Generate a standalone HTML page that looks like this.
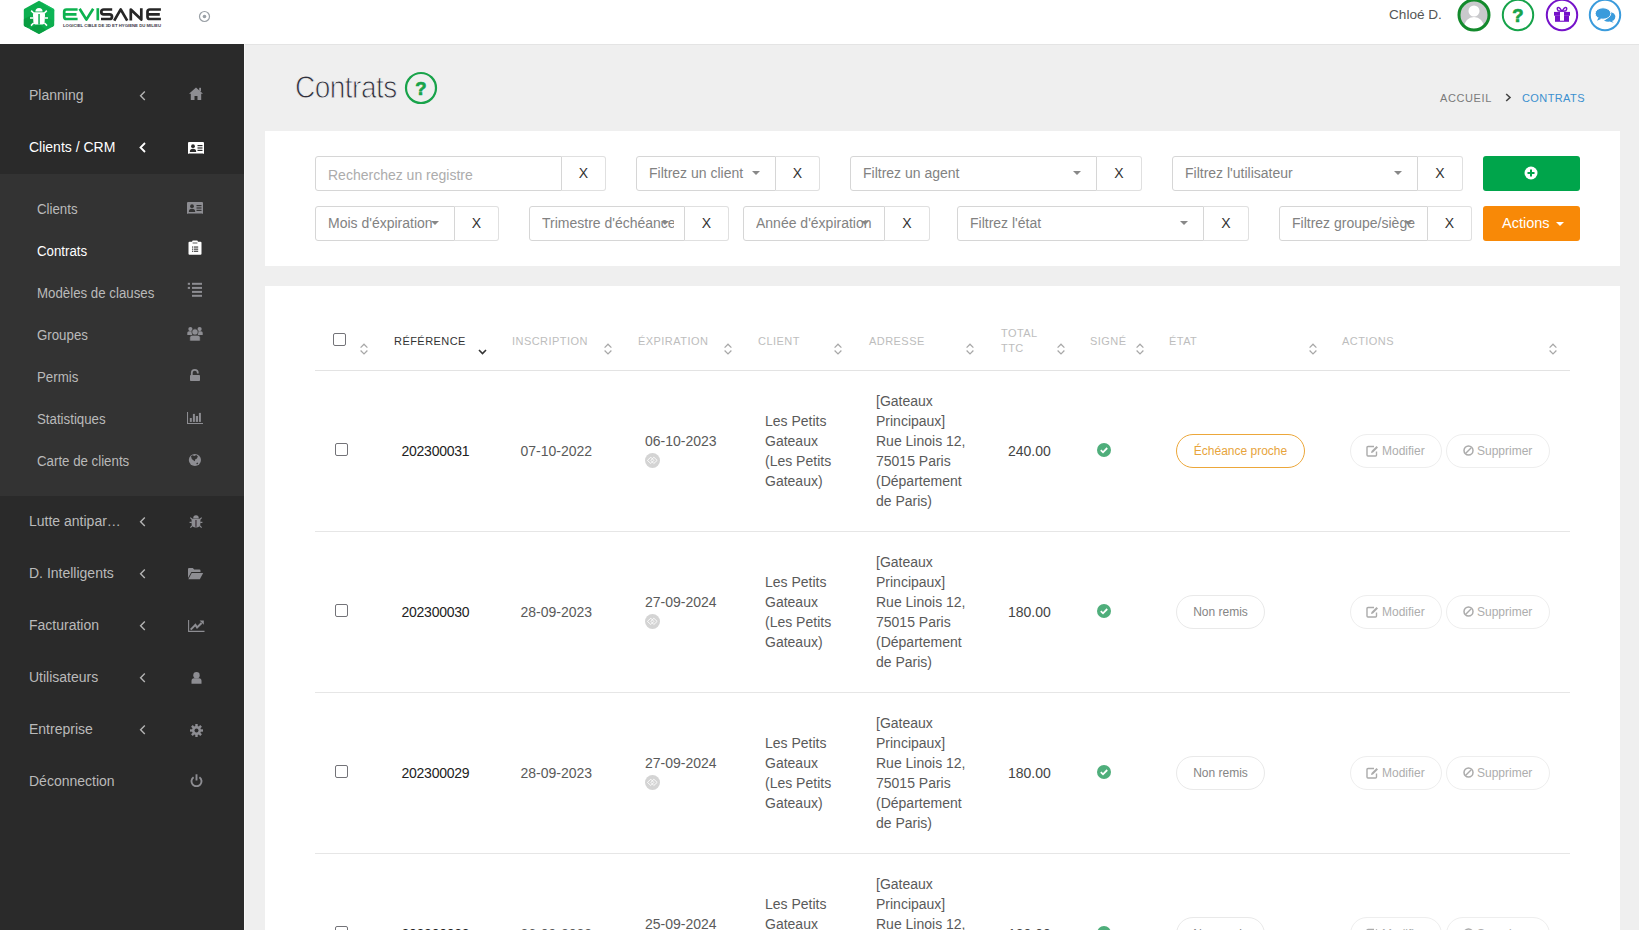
<!DOCTYPE html>
<html><head><meta charset="utf-8">
<style>
*{box-sizing:border-box;margin:0;padding:0}
html,body{width:1639px;height:930px;overflow:hidden;background:#efefef;font-family:"Liberation Sans",sans-serif}
.a{position:absolute}
#hdr{position:absolute;left:0;top:0;width:1639px;height:44px;background:#fff}
#side{position:absolute;left:0;top:44px;width:244px;height:886px;background:#2a2a2a}
#sub{position:absolute;left:0;top:174px;width:244px;height:322px;background:#333}
.mi{position:absolute;left:29px;font-size:14px;color:#b9b9b9;line-height:20px;white-space:nowrap}
.si{position:absolute;left:37px;font-size:14px;transform:scaleX(0.948);transform-origin:0 0;color:#b9b9b9;line-height:20px;white-space:nowrap}
.chev{position:absolute;left:139px;width:7px;height:10px}
.ic{position:absolute}

.inp{position:absolute;height:35px;border:1px solid #d6d6d6;border-radius:3px 0 0 3px;background:#fff;overflow:hidden}
.xb{position:absolute;height:35px;border:1px solid #e0e0e0;border-left:none;border-radius:0 3px 3px 0;background:#fff;font-size:14px;color:#333;text-align:center;line-height:32px}
.ph{position:absolute;left:12px;top:0;line-height:32px;font-size:14px;white-space:nowrap}
.car{position:absolute;width:0;height:0;border-left:4px solid transparent;border-right:4px solid transparent;border-top:4px solid #888}
.th{position:absolute;font-size:11px;letter-spacing:0.45px;color:#bdbdbd;line-height:15px;white-space:nowrap}
.srt{position:absolute}
.td{position:absolute;font-size:14px;color:#5a5a5a;line-height:20px;white-space:nowrap}
.cb{position:absolute;width:13px;height:13px;border:1px solid #737378;border-radius:2px;background:#fff}
.bdg{position:absolute;height:34px;border-radius:17px;font-size:12px;text-align:center;line-height:32px;white-space:nowrap}
</style></head><body>
<div id="hdr">
  <!-- logo -->
  <svg class="a" style="left:22px;top:0" width="34" height="35" viewBox="0 0 34 35">
    <defs><clipPath id="hx"><path d="M17 0.8 L31.5 8.8 Q32.2 9.2 32.2 10 L32.2 25 Q32.2 25.8 31.5 26.2 L17 34 L2.5 26.2 Q1.8 25.8 1.8 25 L1.8 10 Q1.8 9.2 2.5 8.8 Z"/></clipPath></defs>
    <g clip-path="url(#hx)">
    <rect x="0" y="0" width="34" height="35" fill="#0cae4e"/>
    <path d="M17 0 L34 0 L34 12 L24 6Z" fill="#14c262" opacity=".8"/>
    <path d="M0 20 L8 16 L14 22 L6 28 L0 26Z" fill="#07963c" opacity=".7"/>
    <path d="M8 28 L17 24 L24 30 L17 35 L8 35Z" fill="#089a3e" opacity=".8"/>
    <path d="M24 12 L34 8 L34 22 L26 18Z" fill="#10b85a" opacity=".7"/>
    </g>
    <path d="M13.4 11.6 A3.6 3.6 0 0 1 20.6 11.6 Z" fill="#fff"/>
    <path d="M12.2 12.2 L21.8 12.2 Q23.2 12.6 23 15 L22.6 22.5 Q22.4 24.4 20.5 24.4 L13.5 24.4 Q11.6 24.4 11.4 22.5 L11 15 Q10.8 12.6 12.2 12.2Z" fill="#fff"/>
    <rect x="16.3" y="14" width="1.5" height="10.5" fill="#0cae4e"/>
    <path d="M11.8 13.2 L9.2 10.6 M22.2 13.2 L24.8 10.6 M11.2 18 L8 18 M22.8 18 L26 18 M11.6 23 L9 25.6 M22.4 23 L25 25.6" stroke="#fff" stroke-width="1.6"/>
  </svg>
  <svg class="a" style="left:62px;top:7px" width="102" height="22" viewBox="0 0 102 22">
    <g fill="none" stroke-width="2.7" stroke-linejoin="round">
      <path d="M15.6 2.5 H4.5 Q2.2 2.5 2.2 4.8 V9.7 Q2.2 12 4.5 12 H15.6 M2.2 7.3 H14.5" stroke="#0db24f"/>
      <path d="M17.6 1.8 L24.4 12.6 L31.2 1.8" stroke="#0db24f"/>
      <path d="M35.8 1.2 V13.3" stroke="#0db24f"/>
      <path d="M50.2 2.5 H41.8 Q39.3 2.5 39.3 4.9 Q39.3 7.3 41.8 7.3 H47.6 Q50 7.3 50 9.65 Q50 12 47.6 12 H39" stroke="#262626"/>
      <path d="M52.2 13.6 L58.7 2.3 L65.2 13.6" stroke="#262626"/>
      <path d="M68.8 13.6 V2.6 L79.3 12.6 V1.2" stroke="#262626"/>
      <path d="M98.9 2.5 H87.8 Q85.5 2.5 85.5 4.8 V9.7 Q85.5 12 87.8 12 H98.9 M85.5 7.3 H97.8" stroke="#262626"/>
    </g>
    <text x="1" y="20" font-family="Liberation Sans" font-weight="bold" font-size="4" fill="#3a3848" textLength="98" lengthAdjust="spacingAndGlyphs">LOGICIEL CIBLE DE 3D ET HYGIENE DU MILIEU</text>
  </svg>
  <svg class="a" style="left:198px;top:10px" width="13" height="13" viewBox="0 0 13 13">
    <circle cx="6.5" cy="6.5" r="5" fill="none" stroke="#9aa0a6" stroke-width="1.2"/>
    <circle cx="6.5" cy="6.5" r="1.8" fill="#9aa0a6"/>
  </svg>
  <div class="a" style="left:1389px;top:5px;font-size:13.6px;color:#555;line-height:20px">Chloé D.</div>
  <!-- avatar -->
  <svg class="a" style="left:1457px;top:-2px" width="34" height="34" viewBox="0 0 34 34">
    <defs><clipPath id="cp"><circle cx="17" cy="17" r="14"/></clipPath></defs>
    <circle cx="17" cy="17" r="14.5" fill="#c9c9cc"/>
    <g clip-path="url(#cp)" fill="#fff">
      <circle cx="17" cy="13" r="5.5"/>
      <ellipse cx="17" cy="29.5" rx="10" ry="10.5"/>
    </g>
    <circle cx="17" cy="17" r="15" fill="none" stroke="#138a2c" stroke-width="3"/>
  </svg>
  <svg class="a" style="left:1501px;top:-2px" width="34" height="34" viewBox="0 0 34 34">
    <circle cx="17" cy="17" r="15.2" fill="#fff" stroke="#16a34a" stroke-width="2"/>
    <text x="17" y="23.8" text-anchor="middle" font-family="Liberation Sans" font-weight="bold" font-size="18.5" fill="#16a34a" stroke="#16a34a" stroke-width="0.7">?</text>
  </svg>
  <svg class="a" style="left:1545px;top:-2px" width="34" height="34" viewBox="0 0 34 34">
    <circle cx="17" cy="17" r="15.2" fill="#fff" stroke="#7512c9" stroke-width="2"/>
    <g fill="#7512c9">
      <rect x="9" y="13.9" width="16" height="3.8"/>
      <rect x="10" y="17.5" width="14" height="6.3"/>
    </g>
    <path d="M17 13.5 Q14.5 8.8 12.8 9.6 Q11.5 10.6 13.2 12.8 Z M17 13.5 Q19.5 8.8 21.2 9.6 Q22.5 10.6 20.8 12.8 Z" fill="none" stroke="#7512c9" stroke-width="1.4"/>
    <rect x="15" y="13.9" width="4" height="8.8" fill="#fff"/>
  </svg>
  <svg class="a" style="left:1588px;top:-2px" width="34" height="34" viewBox="0 0 34 34">
    <circle cx="17" cy="17" r="15.2" fill="#fff" stroke="#3a9bdc" stroke-width="2"/>
    <path d="M18.5 14.5 Q23 13.5 26 15.5 Q28 17.5 27 20.5 Q26 22.5 24 23 L25.7 24.8 L21.5 23.6 Q18.5 24 16 22.5 Q21 21 18.5 14.5Z" fill="#3a9bdc"/>
    <ellipse cx="15" cy="15.5" rx="7.8" ry="5.7" fill="#3a9bdc" stroke="#fff" stroke-width="0.9"/>
    <path d="M10.5 19.5 L9 22.7 L13.5 20.8Z" fill="#3a9bdc"/>
  </svg>
</div>
<div class="a" style="left:0;top:44px;width:1639px;height:1px;background:#e4e4e4"></div>

<div id="side">
</div>
<div id="sub"></div>
<div class="mi" style="top:85.3px;color:#bababa">Planning</div>
<svg class="a" style="left:138px;top:91px" width="9" height="11" viewBox="0 0 9 11"><path d="M6.8 0.6 L2.6 4.8 L6.8 9" fill="none" stroke="#b4b4b4" stroke-width="1.4"/></svg>
<div class="mi" style="top:137.3px;color:#fff">Clients / CRM</div>
<svg class="a" style="left:138px;top:142px" width="9" height="11" viewBox="0 0 9 11"><path d="M7 1 L2.5 5.5 L7 10" fill="none" stroke="#fff" stroke-width="1.8"/></svg>
<div class="mi" style="top:511.4px;color:#bababa">Lutte antipar…</div>
<svg class="a" style="left:138px;top:517px" width="9" height="11" viewBox="0 0 9 11"><path d="M6.8 0.6 L2.6 4.8 L6.8 9" fill="none" stroke="#b4b4b4" stroke-width="1.4"/></svg>
<div class="mi" style="top:563.4px;color:#bababa">D. Intelligents</div>
<svg class="a" style="left:138px;top:569px" width="9" height="11" viewBox="0 0 9 11"><path d="M6.8 0.6 L2.6 4.8 L6.8 9" fill="none" stroke="#b4b4b4" stroke-width="1.4"/></svg>
<div class="mi" style="top:615.4px;color:#bababa">Facturation</div>
<svg class="a" style="left:138px;top:621px" width="9" height="11" viewBox="0 0 9 11"><path d="M6.8 0.6 L2.6 4.8 L6.8 9" fill="none" stroke="#b4b4b4" stroke-width="1.4"/></svg>
<div class="mi" style="top:667.4px;color:#bababa">Utilisateurs</div>
<svg class="a" style="left:138px;top:673px" width="9" height="11" viewBox="0 0 9 11"><path d="M6.8 0.6 L2.6 4.8 L6.8 9" fill="none" stroke="#b4b4b4" stroke-width="1.4"/></svg>
<div class="mi" style="top:719.4px;color:#bababa">Entreprise</div>
<svg class="a" style="left:138px;top:725px" width="9" height="11" viewBox="0 0 9 11"><path d="M6.8 0.6 L2.6 4.8 L6.8 9" fill="none" stroke="#b4b4b4" stroke-width="1.4"/></svg>
<div class="mi" style="top:771.4px;color:#bababa">Déconnection</div>
<div class="si" style="top:199.05px;color:#bababa">Clients</div>
<div class="si" style="top:241.05px;color:#fff">Contrats</div>
<div class="si" style="top:283.05px;color:#bababa">Modèles de clauses</div>
<div class="si" style="top:325.05px;color:#bababa">Groupes</div>
<div class="si" style="top:367.05px;color:#bababa">Permis</div>
<div class="si" style="top:409.05px;color:#bababa">Statistiques</div>
<div class="si" style="top:451.05px;color:#bababa">Carte de clients</div>
<svg class="a" style="left:189px;top:87px" width="14" height="13" viewBox="0 0 14 13"><path d="M7 0.5 L0 6.8 L1.8 6.8 L1.8 13 L5.5 13 L5.5 9 L8.5 9 L8.5 13 L12.2 13 L12.2 6.8 L14 6.8 Z" fill="#8d8d92"/><rect x="10.2" y="0.8" width="1.8" height="3.5" fill="#8d8d92"/></svg>
<svg class="a" style="left:188px;top:142px" width="16" height="12" viewBox="0 0 16 12"><rect x="0" y="0" width="16" height="12" rx="1" fill="#fff"/><circle cx="5" cy="4.2" r="1.9" fill="#2a2a2a"/><path d="M1.8 10 Q1.8 6.8 5 6.8 Q8.2 6.8 8.2 10Z" fill="#2a2a2a"/><rect x="9.5" y="3" width="5" height="1.2" fill="#2a2a2a"/><rect x="9.5" y="5.4" width="5" height="1.2" fill="#2a2a2a"/><rect x="9.5" y="7.8" width="5" height="1.2" fill="#2a2a2a"/><rect x="1" y="11" width="14" height="1" fill="#2a2a2a" opacity=".5"/></svg>
<svg class="a" style="left:187px;top:202px" width="16" height="12" viewBox="0 0 16 12"><rect x="0" y="0" width="16" height="12" rx="1" fill="#8d8d92"/><circle cx="5" cy="4.2" r="1.9" fill="#333"/><path d="M1.8 10 Q1.8 6.8 5 6.8 Q8.2 6.8 8.2 10Z" fill="#333"/><rect x="9.5" y="3" width="5" height="1.2" fill="#333"/><rect x="9.5" y="5.4" width="5" height="1.2" fill="#333"/><rect x="9.5" y="7.8" width="5" height="1.2" fill="#333"/><rect x="1" y="11" width="14" height="1" fill="#333" opacity=".5"/></svg>
<svg class="a" style="left:188px;top:240px" width="14" height="16" viewBox="0 0 14 16"><rect x="0.5" y="1.8" width="13" height="13" rx="1" fill="#fff"/><rect x="4.2" y="0.6" width="5.6" height="2.6" rx="0.8" fill="#fff"/><rect x="4.6" y="2.6" width="4.8" height="0.8" fill="#333"/><rect x="4" y="6.5" width="1.1" height="1.1" fill="#333"/><rect x="5.8" y="6.5" width="4.4" height="1.1" fill="#333"/><rect x="4" y="8.6" width="1.1" height="1.1" fill="#333"/><rect x="5.8" y="8.6" width="4.4" height="1.1" fill="#333"/><rect x="4" y="10.7" width="1.1" height="1.1" fill="#333"/><rect x="5.8" y="10.7" width="4.4" height="1.1" fill="#333"/></svg>
<svg class="a" style="left:187px;top:282px" width="16" height="16" viewBox="0 0 16 16"><rect x="5" y="0.8" width="10" height="2" fill="#8d8d92"/><rect x="5" y="4.9" width="10" height="2" fill="#8d8d92"/><rect x="5" y="8.9" width="10" height="2" fill="#8d8d92"/><rect x="5" y="12.8" width="10" height="2" fill="#8d8d92"/><rect x="0.8" y="0.8" width="2.2" height="2" fill="#8d8d92"/><rect x="0.8" y="4.9" width="2.2" height="2" fill="#8d8d92"/></svg>
<svg class="a" style="left:187px;top:327px" width="16" height="15" viewBox="0 0 16 15"><circle cx="3.4" cy="2.1" r="2.1" fill="#8d8d92"/><circle cx="12.6" cy="2.1" r="2.1" fill="#8d8d92"/><path d="M0.3 8 L0.3 5.8 Q0.3 4.2 2 4.2 L5 4.2 L5 8Z M15.7 8 L15.7 5.8 Q15.7 4.2 14 4.2 L11 4.2 L11 8Z" fill="#8d8d92"/><circle cx="8" cy="5" r="3.2" stroke="#333" stroke-width="0.7" fill="#8d8d92"/><path d="M2.8 14 L2.8 10.5 Q2.8 8.3 5 8.3 L11 8.3 Q13.2 8.3 13.2 10.5 L13.2 14Z" stroke="#333" stroke-width="0.6" fill="#8d8d92"/></svg>
<svg class="a" style="left:189px;top:369px" width="12" height="12" viewBox="0 0 12 12"><path d="M2.8 6 V3.8 Q2.8 0.9 5.8 0.9 Q8.8 0.9 8.8 3.8 V4.5" fill="none" stroke="#8d8d92" stroke-width="1.8"/><rect x="1" y="6" width="10" height="6" rx="0.8" fill="#8d8d92"/></svg>
<svg class="a" style="left:187px;top:412px" width="17" height="12" viewBox="0 0 17 12"><path d="M0.5 0 V11.5 H16" fill="none" stroke="#8d8d92" stroke-width="1.1"/><rect x="2.8" y="6" width="2" height="3.9" fill="#8d8d92"/><rect x="5.9" y="1.9" width="2" height="8" fill="#8d8d92"/><rect x="8.8" y="4" width="2.2" height="5.9" fill="#8d8d92"/><rect x="11.9" y="0.9" width="2" height="9" fill="#8d8d92"/></svg>
<svg class="a" style="left:188px;top:453px" width="14" height="14" viewBox="0 0 14 14"><circle cx="6.9" cy="7" r="6.1" fill="#8d8d92"/><path d="M3 3.2 L4.5 2.2 L6.3 3 L8.3 2 L9.9 3.4 L8.7 5.8 L7.3 6.3 L6.9 8.2 L5.3 7.2 L3.8 6Z" fill="#333"/><path d="M8.2 10.3 L9.5 9.4 L10.2 10.6 L9 11.4Z" fill="#333"/></svg>
<svg class="a" style="left:189px;top:514px" width="14" height="15" viewBox="0 0 14 15"><path d="M4.2 4.4 A2.8 3.1 0 0 1 9.8 4.4Z" fill="#8d8d92"/><path d="M2.6 4.8 H11.4 V10 Q11.4 13.4 7 13.4 Q2.6 13.4 2.6 10Z" fill="#8d8d92"/><rect x="6.2" y="6" width="1.5" height="6.8" fill="#4a4048"/><path d="M0.6 8.3 H2.8 M11.2 8.3 H13.4 M1.3 3.6 L3.2 5.4 M12.7 3.6 L10.8 5.4 M1.4 13.7 L3.4 11.6 M12.6 13.7 L10.6 11.6" stroke="#8d8d92" stroke-width="1.2"/></svg>
<svg class="a" style="left:188px;top:568px" width="16" height="12" viewBox="0 0 16 12"><path d="M0 1 Q0 0 1 0 L4.8 0 L6.2 1.5 L11.5 1.5 Q12.5 1.5 12.5 2.5 L12.5 4 L3.4 4 L0 10Z" fill="#8d8d92"/><path d="M3.7 5 L15.2 5 L11.8 11.2 L0.4 11.2Z" fill="#8d8d92"/></svg>
<svg class="a" style="left:187.5px;top:620px" width="17" height="13" viewBox="0 0 17 13"><path d="M0.6 0 V11.4 H16.5" fill="none" stroke="#8d8d92" stroke-width="1.1"/><path d="M2.7 9.6 L7.4 4.9 L9.1 7.5 L13.6 3" fill="none" stroke="#8d8d92" stroke-width="2"/><path d="M11.6 0.6 L15.8 0.6 L15.8 4.8Z" fill="#8d8d92"/></svg>
<svg class="a" style="left:190.5px;top:672px" width="11" height="12" viewBox="0 0 11 12"><circle cx="5.5" cy="3.2" r="3.2" fill="#8d8d92"/><path d="M0.5 11.8 L0.5 9 Q0.5 6.3 3 6.3 L8 6.3 Q10.5 6.3 10.5 9 L10.5 11.8Z" fill="#8d8d92"/></svg>
<svg class="a" style="left:189.5px;top:723.5px" width="13" height="13" viewBox="0 0 13 13"><rect x="5.3" y="0" width="2.4" height="13" fill="#8d8d92" transform="rotate(0 6.5 6.5)"/><rect x="5.3" y="0" width="2.4" height="13" fill="#8d8d92" transform="rotate(45 6.5 6.5)"/><rect x="5.3" y="0" width="2.4" height="13" fill="#8d8d92" transform="rotate(90 6.5 6.5)"/><rect x="5.3" y="0" width="2.4" height="13" fill="#8d8d92" transform="rotate(135 6.5 6.5)"/><circle cx="6.5" cy="6.5" r="4.5" fill="#8d8d92"/><circle cx="6.5" cy="6.5" r="2" fill="#2a2a2a"/></svg>
<svg class="a" style="left:189.5px;top:774px" width="13" height="13" viewBox="0 0 13 13"><path d="M3.6 3.2 A5 5 0 1 0 9.4 3.2" fill="none" stroke="#8d8d92" stroke-width="1.9"/><rect x="5.55" y="0.3" width="1.9" height="6.2" fill="#8d8d92"/></svg>
<div class="a" style="left:244px;top:44px;width:1px;height:886px;background:#f7f7f7"></div>


<div class="a" style="left:295px;top:68px;font-size:31px;line-height:40px;color:#30303c;-webkit-text-stroke:0.9px #efefef;letter-spacing:-0.6px;transform:scaleX(0.905);transform-origin:0 0;white-space:nowrap">Contrats</div>
<svg class="a" style="left:404px;top:71px" width="34" height="34" viewBox="0 0 34 34"><circle cx="17" cy="17" r="15" fill="none" stroke="#18a34a" stroke-width="2.2"/><text x="17" y="23.8" text-anchor="middle" font-family="Liberation Sans" font-weight="bold" font-size="18.5" fill="#18a34a" stroke="#18a34a" stroke-width="0.7">?</text></svg>
<div class="a" style="left:1440px;top:91px;font-size:11px;letter-spacing:0.6px;color:#7a7a7a;line-height:14px">ACCUEIL</div>
<svg class="a" style="left:1505px;top:93px" width="7" height="9" viewBox="0 0 7 9"><path d="M1.2 1 L5 4.5 L1.2 8" fill="none" stroke="#444" stroke-width="1.6"/></svg>
<div class="a" style="left:1522px;top:91px;font-size:11px;letter-spacing:0.4px;color:#3b8fd0;line-height:14px">CONTRATS</div>
<div class="a" style="left:265px;top:131px;width:1355px;height:135px;background:#fff"></div>
<div class="inp" style="left:315px;top:156px;width:247px"><div class="ph" style="color:#acacac;right:10px;overflow:hidden;top:1.5px">Recherchez un registre</div></div>
<div class="xb" style="left:562px;top:156px;width:44px">X</div>
<div class="inp" style="left:636px;top:156px;width:140px"><div class="ph" style="color:#828282;right:10px;overflow:hidden;top:0px">Filtrez un client</div></div>
<div class="car" style="left:752px;top:171px"></div>
<div class="xb" style="left:776px;top:156px;width:44px">X</div>
<div class="inp" style="left:850px;top:156px;width:247px"><div class="ph" style="color:#828282;right:10px;overflow:hidden;top:0px">Filtrez un agent</div></div>
<div class="car" style="left:1073px;top:171px"></div>
<div class="xb" style="left:1097px;top:156px;width:45px">X</div>
<div class="inp" style="left:1172px;top:156px;width:246px"><div class="ph" style="color:#828282;right:10px;overflow:hidden;top:0px">Filtrez l'utilisateur</div></div>
<div class="car" style="left:1394px;top:171px"></div>
<div class="xb" style="left:1418px;top:156px;width:45px">X</div>
<div class="inp" style="left:315px;top:206px;width:140px"><div class="ph" style="color:#828282;right:10px;overflow:hidden;top:0px">Mois d'éxpiration</div></div>
<div class="car" style="left:431px;top:221px"></div>
<div class="xb" style="left:455px;top:206px;width:44px">X</div>
<div class="inp" style="left:529px;top:206px;width:156px"><div class="ph" style="color:#828282;right:10px;overflow:hidden;top:0px">Trimestre d'échéance</div></div>
<div class="car" style="left:661px;top:221px"></div>
<div class="xb" style="left:685px;top:206px;width:44px">X</div>
<div class="inp" style="left:743px;top:206px;width:142px"><div class="ph" style="color:#828282;right:10px;overflow:hidden;top:0px">Année d'éxpiration</div></div>
<div class="car" style="left:861px;top:221px"></div>
<div class="xb" style="left:885px;top:206px;width:45px">X</div>
<div class="inp" style="left:957px;top:206px;width:247px"><div class="ph" style="color:#828282;right:10px;overflow:hidden;top:0px">Filtrez l'état</div></div>
<div class="car" style="left:1180px;top:221px"></div>
<div class="xb" style="left:1204px;top:206px;width:45px">X</div>
<div class="inp" style="left:1279px;top:206px;width:149px"><div class="ph" style="color:#828282;right:10px;overflow:hidden;top:0px">Filtrez groupe/siège</div></div>
<div class="car" style="left:1404px;top:221px"></div>
<div class="xb" style="left:1428px;top:206px;width:44px">X</div>
<div class="a" style="left:1483px;top:156px;width:97px;height:35px;background:#00a54b;border-radius:3px"></div>
<svg class="a" style="left:1524px;top:166px" width="14" height="14" viewBox="0 0 14 14"><circle cx="7" cy="7" r="6.5" fill="#fff"/><rect x="6" y="3.5" width="2" height="7" fill="#00a54b"/><rect x="3.5" y="6" width="7" height="2" fill="#00a54b"/></svg>
<div class="a" style="left:1483px;top:206px;width:97px;height:35px;background:#f88907;border-radius:3px"></div>
<div class="a" style="left:1502px;top:213px;font-size:14.5px;line-height:20px;color:#fff">Actions</div>
<div class="car" style="left:1556px;top:222px;border-top-color:#fff;border-left-width:4px;border-right-width:4px"></div>
<div class="a" style="left:265px;top:286px;width:1355px;height:644px;background:#fff"></div>
<div class="cb" style="left:333px;top:333px"></div>
<svg class="srt" style="left:360px;top:343px" width="8" height="12" viewBox="0 0 8 12"><path d="M0.6 4.6 L4 1.2 L7.4 4.6 M0.6 7.5 L4 10.9 L7.4 7.5" fill="none" stroke="#a8a8a8" stroke-width="1.25"/></svg>
<div class="th" style="left:394px;top:334px;color:#333">RÉFÉRENCE</div>
<div class="th" style="left:512px;top:334px">INSCRIPTION</div>
<div class="th" style="left:638px;top:334px">ÉXPIRATION</div>
<div class="th" style="left:758px;top:334px">CLIENT</div>
<div class="th" style="left:869px;top:334px">ADRESSE</div>
<div class="th" style="left:1090px;top:334px">SIGNÉ</div>
<div class="th" style="left:1169px;top:334px">ÉTAT</div>
<div class="th" style="left:1342px;top:334px">ACTIONS</div>
<div class="th" style="left:1001px;top:326px">TOTAL<br>TTC</div>
<svg class="srt" style="left:478px;top:349px" width="9" height="6" viewBox="0 0 9 6"><path d="M1 1 L4.5 4.5 L8 1" fill="none" stroke="#333" stroke-width="1.6"/></svg>
<svg class="srt" style="left:604px;top:343px" width="8" height="12" viewBox="0 0 8 12"><path d="M0.6 4.6 L4 1.2 L7.4 4.6 M0.6 7.5 L4 10.9 L7.4 7.5" fill="none" stroke="#a8a8a8" stroke-width="1.25"/></svg>
<svg class="srt" style="left:724px;top:343px" width="8" height="12" viewBox="0 0 8 12"><path d="M0.6 4.6 L4 1.2 L7.4 4.6 M0.6 7.5 L4 10.9 L7.4 7.5" fill="none" stroke="#a8a8a8" stroke-width="1.25"/></svg>
<svg class="srt" style="left:834px;top:343px" width="8" height="12" viewBox="0 0 8 12"><path d="M0.6 4.6 L4 1.2 L7.4 4.6 M0.6 7.5 L4 10.9 L7.4 7.5" fill="none" stroke="#a8a8a8" stroke-width="1.25"/></svg>
<svg class="srt" style="left:966px;top:343px" width="8" height="12" viewBox="0 0 8 12"><path d="M0.6 4.6 L4 1.2 L7.4 4.6 M0.6 7.5 L4 10.9 L7.4 7.5" fill="none" stroke="#a8a8a8" stroke-width="1.25"/></svg>
<svg class="srt" style="left:1057px;top:343px" width="8" height="12" viewBox="0 0 8 12"><path d="M0.6 4.6 L4 1.2 L7.4 4.6 M0.6 7.5 L4 10.9 L7.4 7.5" fill="none" stroke="#a8a8a8" stroke-width="1.25"/></svg>
<svg class="srt" style="left:1136px;top:343px" width="8" height="12" viewBox="0 0 8 12"><path d="M0.6 4.6 L4 1.2 L7.4 4.6 M0.6 7.5 L4 10.9 L7.4 7.5" fill="none" stroke="#a8a8a8" stroke-width="1.25"/></svg>
<svg class="srt" style="left:1309px;top:343px" width="8" height="12" viewBox="0 0 8 12"><path d="M0.6 4.6 L4 1.2 L7.4 4.6 M0.6 7.5 L4 10.9 L7.4 7.5" fill="none" stroke="#a8a8a8" stroke-width="1.25"/></svg>
<svg class="srt" style="left:1549px;top:343px" width="8" height="12" viewBox="0 0 8 12"><path d="M0.6 4.6 L4 1.2 L7.4 4.6 M0.6 7.5 L4 10.9 L7.4 7.5" fill="none" stroke="#a8a8a8" stroke-width="1.25"/></svg>
<div class="a" style="left:315px;top:370px;width:1255px;height:1px;background:#e3e3e3"></div>
<div class="cb" style="left:335px;top:443px"></div>
<div class="td" style="left:401.5px;top:441.1px;color:#222;letter-spacing:-0.25px">202300031</div>
<div class="td" style="left:520.5px;top:441.1px">07-10-2022</div>
<div class="td" style="left:645px;top:431.4px">06-10-2023</div>
<svg class="a" style="left:645px;top:453px" width="15" height="15" viewBox="0 0 15 15"><circle cx="7.5" cy="7.5" r="7.5" fill="#d4d4d4"/><path d="M2.4 7.4 L5.8 4.2 L8.9 7.4 L5.8 10.5Z M5.9 7.4 L8.8 4.2 L12.2 7.4 L8.8 10.5Z" fill="none" stroke="#fff" stroke-width="0.85"/></svg>
<div class="td" style="left:765px;top:410.8px">Les Petits</div>
<div class="td" style="left:765px;top:430.8px">Gateaux</div>
<div class="td" style="left:765px;top:450.8px">(Les Petits</div>
<div class="td" style="left:765px;top:470.8px">Gateaux)</div>
<div class="td" style="left:876px;top:391.1px">[Gateaux</div>
<div class="td" style="left:876px;top:411.1px">Principaux]</div>
<div class="td" style="left:876px;top:431.1px">Rue Linois 12,</div>
<div class="td" style="left:876px;top:451.1px">75015 Paris</div>
<div class="td" style="left:876px;top:471.1px">(Département</div>
<div class="td" style="left:876px;top:491.1px">de Paris)</div>
<div class="td" style="left:1008px;top:440.9px;color:#444">240.00</div>
<svg class="a" style="left:1097px;top:443px" width="14" height="14" viewBox="0 0 14 14"><circle cx="7" cy="7" r="7" fill="#4fae7b"/><path d="M3.8 7.2 L6 9.3 L10.2 5" fill="none" stroke="#fff" stroke-width="1.8"/></svg>
<div class="bdg" style="left:1176px;top:434px;width:129px;border:1px solid #eca73a;color:#e7a43c">Échéance proche</div>
<div class="bdg" style="left:1350px;top:434px;width:92px;border:1px solid #eeeeee;color:#adadad"><svg style="position:absolute;left:15px;top:9.5px" width="13" height="12" viewBox="0 0 13 12"><path d="M8 1.5 H2 Q1 1.5 1 2.5 V10 Q1 11 2 11 H9.5 Q10.5 11 10.5 10 V6.5" fill="none" stroke="#ababab" stroke-width="1.4"/><path d="M5 8 L5.5 6 L10.5 1 L12 2.5 L7 7.5Z" fill="#ababab"/></svg><span style="position:absolute;left:31px;top:0">Modifier</span></div>
<div class="bdg" style="left:1446px;top:434px;width:104px;border:1px solid #eeeeee;color:#adadad"><svg style="position:absolute;left:16px;top:10px" width="11" height="11" viewBox="0 0 11 11"><circle cx="5.5" cy="5.5" r="4.5" fill="none" stroke="#ababab" stroke-width="1.5"/><path d="M2.5 8.5 L8.5 2.5" stroke="#ababab" stroke-width="1.5"/></svg><span style="position:absolute;left:30px;top:0">Supprimer</span></div>
<div class="a" style="left:315px;top:531px;width:1255px;height:1px;background:#e6e6e6"></div>
<div class="cb" style="left:335px;top:604px"></div>
<div class="td" style="left:401.5px;top:602.1px;color:#222;letter-spacing:-0.25px">202300030</div>
<div class="td" style="left:520.5px;top:602.1px">28-09-2023</div>
<div class="td" style="left:645px;top:592.4px">27-09-2024</div>
<svg class="a" style="left:645px;top:614px" width="15" height="15" viewBox="0 0 15 15"><circle cx="7.5" cy="7.5" r="7.5" fill="#d4d4d4"/><path d="M2.4 7.4 L5.8 4.2 L8.9 7.4 L5.8 10.5Z M5.9 7.4 L8.8 4.2 L12.2 7.4 L8.8 10.5Z" fill="none" stroke="#fff" stroke-width="0.85"/></svg>
<div class="td" style="left:765px;top:571.8px">Les Petits</div>
<div class="td" style="left:765px;top:591.8px">Gateaux</div>
<div class="td" style="left:765px;top:611.8px">(Les Petits</div>
<div class="td" style="left:765px;top:631.8px">Gateaux)</div>
<div class="td" style="left:876px;top:552.1px">[Gateaux</div>
<div class="td" style="left:876px;top:572.1px">Principaux]</div>
<div class="td" style="left:876px;top:592.1px">Rue Linois 12,</div>
<div class="td" style="left:876px;top:612.1px">75015 Paris</div>
<div class="td" style="left:876px;top:632.1px">(Département</div>
<div class="td" style="left:876px;top:652.1px">de Paris)</div>
<div class="td" style="left:1008px;top:601.9px;color:#444">180.00</div>
<svg class="a" style="left:1097px;top:604px" width="14" height="14" viewBox="0 0 14 14"><circle cx="7" cy="7" r="7" fill="#4fae7b"/><path d="M3.8 7.2 L6 9.3 L10.2 5" fill="none" stroke="#fff" stroke-width="1.8"/></svg>
<div class="bdg" style="left:1176px;top:595px;width:89px;border:1px solid #e9e9e9;color:#858585">Non remis</div>
<div class="bdg" style="left:1350px;top:595px;width:92px;border:1px solid #eeeeee;color:#adadad"><svg style="position:absolute;left:15px;top:9.5px" width="13" height="12" viewBox="0 0 13 12"><path d="M8 1.5 H2 Q1 1.5 1 2.5 V10 Q1 11 2 11 H9.5 Q10.5 11 10.5 10 V6.5" fill="none" stroke="#ababab" stroke-width="1.4"/><path d="M5 8 L5.5 6 L10.5 1 L12 2.5 L7 7.5Z" fill="#ababab"/></svg><span style="position:absolute;left:31px;top:0">Modifier</span></div>
<div class="bdg" style="left:1446px;top:595px;width:104px;border:1px solid #eeeeee;color:#adadad"><svg style="position:absolute;left:16px;top:10px" width="11" height="11" viewBox="0 0 11 11"><circle cx="5.5" cy="5.5" r="4.5" fill="none" stroke="#ababab" stroke-width="1.5"/><path d="M2.5 8.5 L8.5 2.5" stroke="#ababab" stroke-width="1.5"/></svg><span style="position:absolute;left:30px;top:0">Supprimer</span></div>
<div class="a" style="left:315px;top:692px;width:1255px;height:1px;background:#e6e6e6"></div>
<div class="cb" style="left:335px;top:765px"></div>
<div class="td" style="left:401.5px;top:763.1px;color:#222;letter-spacing:-0.25px">202300029</div>
<div class="td" style="left:520.5px;top:763.1px">28-09-2023</div>
<div class="td" style="left:645px;top:753.4px">27-09-2024</div>
<svg class="a" style="left:645px;top:775px" width="15" height="15" viewBox="0 0 15 15"><circle cx="7.5" cy="7.5" r="7.5" fill="#d4d4d4"/><path d="M2.4 7.4 L5.8 4.2 L8.9 7.4 L5.8 10.5Z M5.9 7.4 L8.8 4.2 L12.2 7.4 L8.8 10.5Z" fill="none" stroke="#fff" stroke-width="0.85"/></svg>
<div class="td" style="left:765px;top:732.8px">Les Petits</div>
<div class="td" style="left:765px;top:752.8px">Gateaux</div>
<div class="td" style="left:765px;top:772.8px">(Les Petits</div>
<div class="td" style="left:765px;top:792.8px">Gateaux)</div>
<div class="td" style="left:876px;top:713.1px">[Gateaux</div>
<div class="td" style="left:876px;top:733.1px">Principaux]</div>
<div class="td" style="left:876px;top:753.1px">Rue Linois 12,</div>
<div class="td" style="left:876px;top:773.1px">75015 Paris</div>
<div class="td" style="left:876px;top:793.1px">(Département</div>
<div class="td" style="left:876px;top:813.1px">de Paris)</div>
<div class="td" style="left:1008px;top:762.9px;color:#444">180.00</div>
<svg class="a" style="left:1097px;top:765px" width="14" height="14" viewBox="0 0 14 14"><circle cx="7" cy="7" r="7" fill="#4fae7b"/><path d="M3.8 7.2 L6 9.3 L10.2 5" fill="none" stroke="#fff" stroke-width="1.8"/></svg>
<div class="bdg" style="left:1176px;top:756px;width:89px;border:1px solid #e9e9e9;color:#858585">Non remis</div>
<div class="bdg" style="left:1350px;top:756px;width:92px;border:1px solid #eeeeee;color:#adadad"><svg style="position:absolute;left:15px;top:9.5px" width="13" height="12" viewBox="0 0 13 12"><path d="M8 1.5 H2 Q1 1.5 1 2.5 V10 Q1 11 2 11 H9.5 Q10.5 11 10.5 10 V6.5" fill="none" stroke="#ababab" stroke-width="1.4"/><path d="M5 8 L5.5 6 L10.5 1 L12 2.5 L7 7.5Z" fill="#ababab"/></svg><span style="position:absolute;left:31px;top:0">Modifier</span></div>
<div class="bdg" style="left:1446px;top:756px;width:104px;border:1px solid #eeeeee;color:#adadad"><svg style="position:absolute;left:16px;top:10px" width="11" height="11" viewBox="0 0 11 11"><circle cx="5.5" cy="5.5" r="4.5" fill="none" stroke="#ababab" stroke-width="1.5"/><path d="M2.5 8.5 L8.5 2.5" stroke="#ababab" stroke-width="1.5"/></svg><span style="position:absolute;left:30px;top:0">Supprimer</span></div>
<div class="a" style="left:315px;top:853px;width:1255px;height:1px;background:#e6e6e6"></div>
<div class="cb" style="left:335px;top:926px"></div>
<div class="td" style="left:401.5px;top:924.1px;color:#222;letter-spacing:-0.25px">202300028</div>
<div class="td" style="left:520.5px;top:924.1px">26-09-2023</div>
<div class="td" style="left:645px;top:914.4px">25-09-2024</div>
<svg class="a" style="left:645px;top:936px" width="15" height="15" viewBox="0 0 15 15"><circle cx="7.5" cy="7.5" r="7.5" fill="#d4d4d4"/><path d="M2.4 7.4 L5.8 4.2 L8.9 7.4 L5.8 10.5Z M5.9 7.4 L8.8 4.2 L12.2 7.4 L8.8 10.5Z" fill="none" stroke="#fff" stroke-width="0.85"/></svg>
<div class="td" style="left:765px;top:893.8px">Les Petits</div>
<div class="td" style="left:765px;top:913.8px">Gateaux</div>
<div class="td" style="left:765px;top:933.8px">(Les Petits</div>
<div class="td" style="left:765px;top:953.8px">Gateaux)</div>
<div class="td" style="left:876px;top:874.1px">[Gateaux</div>
<div class="td" style="left:876px;top:894.1px">Principaux]</div>
<div class="td" style="left:876px;top:914.1px">Rue Linois 12,</div>
<div class="td" style="left:876px;top:934.1px">75015 Paris</div>
<div class="td" style="left:876px;top:954.1px">(Département</div>
<div class="td" style="left:876px;top:974.1px">de Paris)</div>
<div class="td" style="left:1008px;top:923.9px;color:#444">180.00</div>
<svg class="a" style="left:1097px;top:926px" width="14" height="14" viewBox="0 0 14 14"><circle cx="7" cy="7" r="7" fill="#4fae7b"/><path d="M3.8 7.2 L6 9.3 L10.2 5" fill="none" stroke="#fff" stroke-width="1.8"/></svg>
<div class="bdg" style="left:1176px;top:917px;width:89px;border:1px solid #e9e9e9;color:#858585">Non remis</div>
<div class="bdg" style="left:1350px;top:917px;width:92px;border:1px solid #eeeeee;color:#adadad"><svg style="position:absolute;left:15px;top:9.5px" width="13" height="12" viewBox="0 0 13 12"><path d="M8 1.5 H2 Q1 1.5 1 2.5 V10 Q1 11 2 11 H9.5 Q10.5 11 10.5 10 V6.5" fill="none" stroke="#ababab" stroke-width="1.4"/><path d="M5 8 L5.5 6 L10.5 1 L12 2.5 L7 7.5Z" fill="#ababab"/></svg><span style="position:absolute;left:31px;top:0">Modifier</span></div>
<div class="bdg" style="left:1446px;top:917px;width:104px;border:1px solid #eeeeee;color:#adadad"><svg style="position:absolute;left:16px;top:10px" width="11" height="11" viewBox="0 0 11 11"><circle cx="5.5" cy="5.5" r="4.5" fill="none" stroke="#ababab" stroke-width="1.5"/><path d="M2.5 8.5 L8.5 2.5" stroke="#ababab" stroke-width="1.5"/></svg><span style="position:absolute;left:30px;top:0">Supprimer</span></div>
</body></html>
